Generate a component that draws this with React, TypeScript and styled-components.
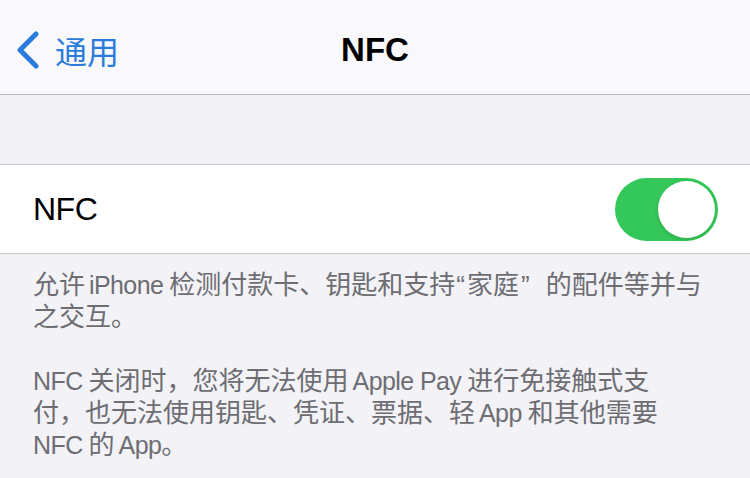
import React from "react";
import styled, { createGlobalStyle } from "styled-components";

const GlobalStyle = createGlobalStyle`
  html, body { margin: 0; padding: 0; background: #f2f2f7; }
  body { font-family: "Liberation Sans", "Noto Sans CJK SC", sans-serif; -webkit-font-smoothing: antialiased; }
`;

const Page = styled.div`
  width: 750px;
  height: 478px;
  overflow: hidden;
  background: #f2f2f7;
  display: flex;
  flex-direction: column;
`;

const NavBar = styled.header`
  height: 95px;
  flex: none;
  background: #f9f9fb;
  border-bottom: 1px solid #b9b9bd;
  display: grid;
  grid-template-columns: 1fr auto 1fr;
  align-items: center;
  padding-top: 6px;
  box-sizing: border-box;
`;

const BackButton = styled.div`
  display: flex;
  align-items: center;
  gap: 15px;
  padding-left: 16px;
  color: #2a7bdb;
  font-size: 32px;
  font-family: "Noto Sans CJK SC", sans-serif;
`;

const Title = styled.h1`
  margin: 0;
  font-size: 33px;
  font-weight: 700;
  color: #000;
  font-family: "Liberation Sans", sans-serif;
`;

const Gap = styled.div`
  height: 69px;
  flex: none;
`;

const Group = styled.section`
  background: #fff;
  border-top: 1px solid #c8c8cc;
  border-bottom: 1px solid #c8c8cc;
  flex: none;
`;

const Row = styled.div`
  height: 88px;
  display: flex;
  align-items: center;
  justify-content: space-between;
  padding: 0 32px 0 33px;
`;

const RowLabel = styled.span`
  font-size: 32px;
  letter-spacing: -0.5px;
  color: #000;
  font-family: "Liberation Sans", sans-serif;
`;

const Switch = styled.div<{ $on: boolean }>`
  width: 103px;
  height: 63px;
  border-radius: 32px;
  background: ${(p) => (p.$on ? "#34c759" : "#e9e9eb")};
  position: relative;
  flex: none;
`;

const Knob = styled.div<{ $on: boolean }>`
  position: absolute;
  top: 3px;
  ${(p) => (p.$on ? "right: 3px;" : "left: 3px;")}
  width: 57px;
  height: 57px;
  border-radius: 50%;
  background: #fff;
  box-shadow: 0 2px 4px rgba(0, 0, 0, 0.12);
`;

const Footer = styled.div`
  padding: 15px 33px 0 33px;
  color: #6d6d72;
  font-size: 26px;
  line-height: 32px;
  font-family: "Liberation Sans", "Noto Sans CJK SC", sans-serif;
`;

const Para = styled.p`
  margin: 0 0 32px 0;
  white-space: nowrap;
`;

const Latin = styled.span<{ $first?: boolean; $last?: boolean }>`
  font-size: 25px;
  letter-spacing: -0.6px;
  margin-left: ${(p) => (p.$first ? "0" : "4px")};
  margin-right: ${(p) => (p.$last ? "0" : "6px")};
`;

const Quote = styled.span<{ $close?: boolean }>`
  margin: ${(p) => (p.$close ? "0 16px 0 2px" : "0 2px 0 1px")};
`;

const Chevron = () => (
  <svg width="24" height="38" viewBox="0 0 24 38" fill="none">
    <polyline
      points="20,3 4,19 20,35"
      stroke="#2a7bdb"
      strokeWidth="5"
      strokeLinecap="round"
      strokeLinejoin="round"
    />
  </svg>
);

export default function App() {
  return (
    <>
      <GlobalStyle />
      <Page>
        <NavBar>
          <BackButton>
            <Chevron />
            <span>通用</span>
          </BackButton>
          <Title>NFC</Title>
          <div />
        </NavBar>
        <Gap />
        <Group>
          <Row>
            <RowLabel>NFC</RowLabel>
            <Switch $on={true}>
              <Knob $on={true} />
            </Switch>
          </Row>
        </Group>
        <Footer>
          <Para>
            允许<Latin>iPhone</Latin>检测付款卡、钥匙和支持<Quote>“</Quote>家庭<Quote $close>”</Quote>的配件等并与
            <br />
            之交互。
          </Para>
          <Para>
            <Latin $first>NFC</Latin>关闭时，您将无法使用<Latin>Apple Pay</Latin>进行免接触式支
            <br />
            付，也无法使用钥匙、凭证、票据、轻<Latin>App</Latin>和其他需要
            <br />
            <Latin $first>NFC</Latin>的<Latin $last>App</Latin>。
          </Para>
        </Footer>
      </Page>
    </>
  );
}
